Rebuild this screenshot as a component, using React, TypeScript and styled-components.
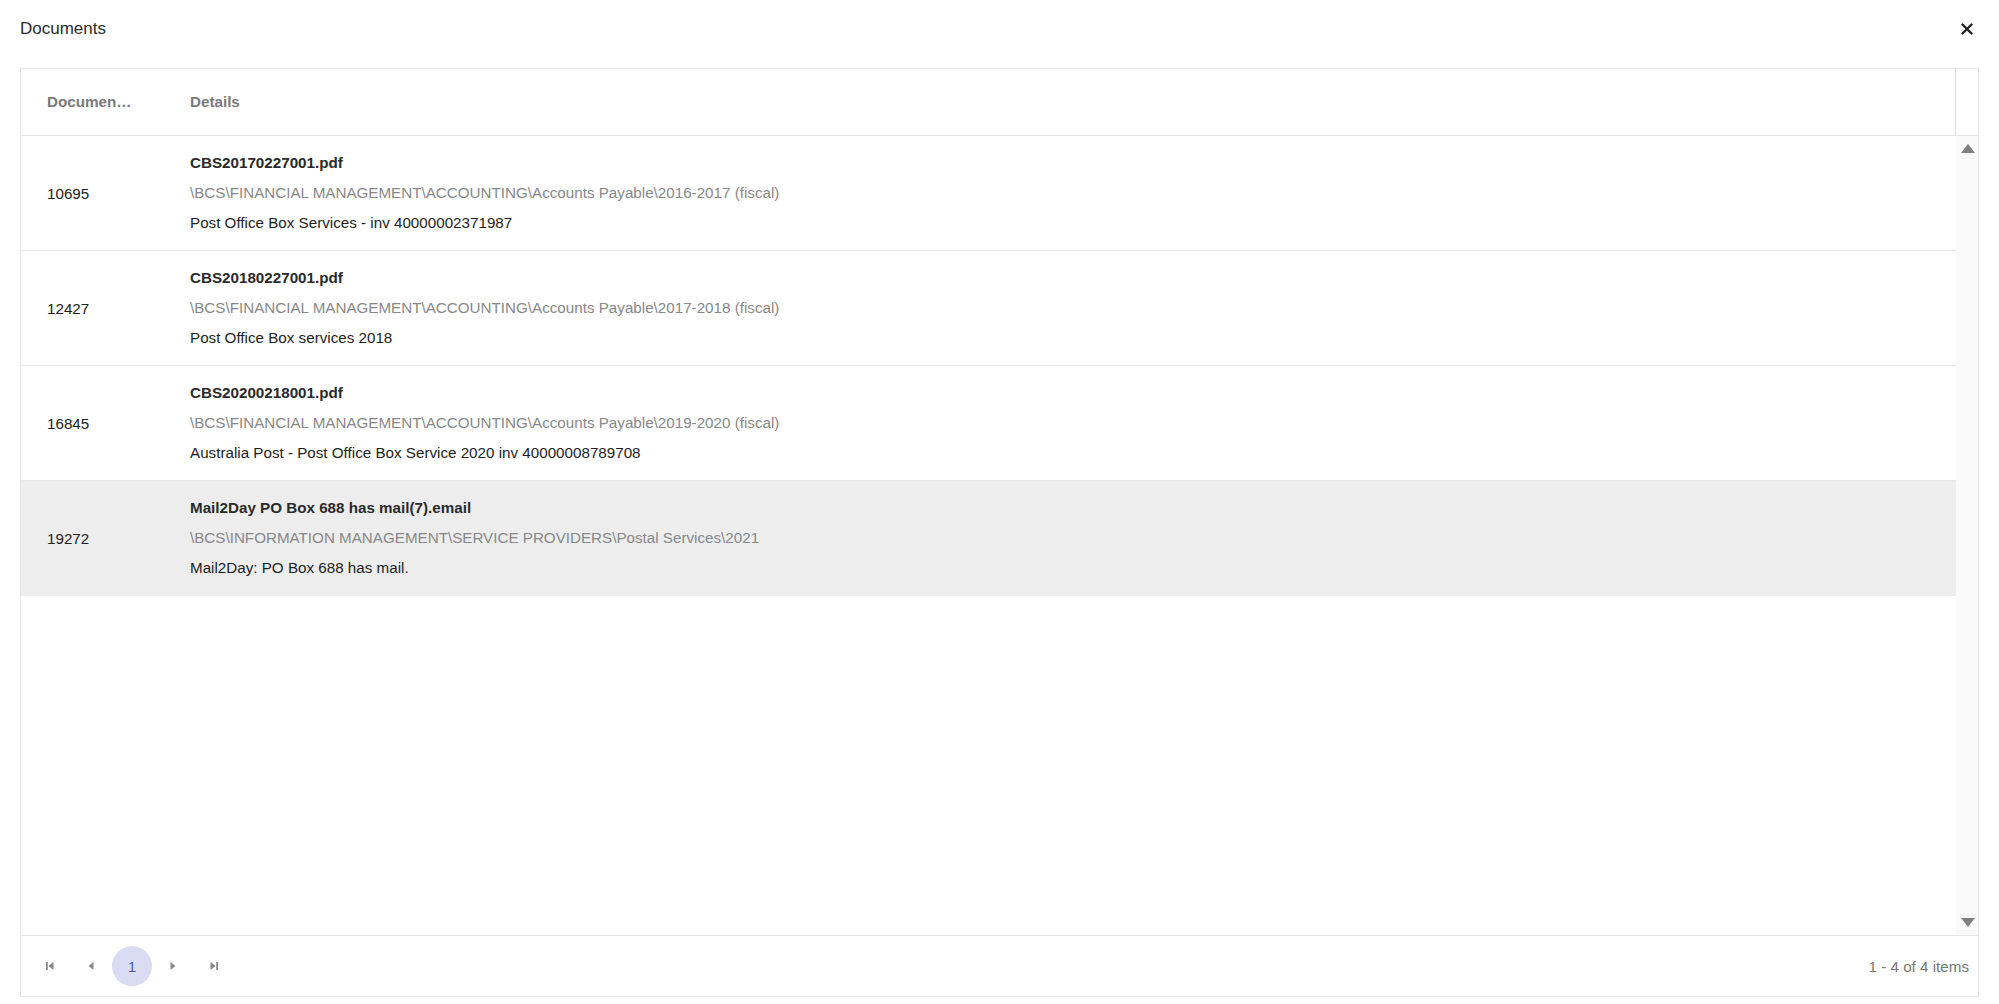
import React from "react";
import styled, { createGlobalStyle } from "styled-components";

type Doc = {
  id: string;
  name: string;
  path: string;
  description: string;
  selected?: boolean;
};

const docs: Doc[] = [
  {
    id: "10695",
    name: "CBS20170227001.pdf",
    path: "\\BCS\\FINANCIAL MANAGEMENT\\ACCOUNTING\\Accounts Payable\\2016-2017 (fiscal)",
    description: "Post Office Box Services - inv 40000002371987",
  },
  {
    id: "12427",
    name: "CBS20180227001.pdf",
    path: "\\BCS\\FINANCIAL MANAGEMENT\\ACCOUNTING\\Accounts Payable\\2017-2018 (fiscal)",
    description: "Post Office Box services 2018",
  },
  {
    id: "16845",
    name: "CBS20200218001.pdf",
    path: "\\BCS\\FINANCIAL MANAGEMENT\\ACCOUNTING\\Accounts Payable\\2019-2020 (fiscal)",
    description: "Australia Post - Post Office Box Service 2020 inv 40000008789708",
  },
  {
    id: "19272",
    name: "Mail2Day PO Box 688 has mail(7).email",
    path: "\\BCS\\INFORMATION MANAGEMENT\\SERVICE PROVIDERS\\Postal Services\\2021",
    description: "Mail2Day: PO Box 688 has mail.",
    selected: true,
  },
];

function PagerIcon({ kind }: { kind: "first" | "prev" | "next" | "last" }) {
  return (
    <svg width="12" height="12" viewBox="0 0 12 12" fill="#8a8a8a">
      {kind === "first" && (
        <>
          <rect x="2" y="2" width="1.8" height="8" />
          <polygon points="9.5,2 9.5,10 4.2,6" />
        </>
      )}
      {kind === "prev" && <polygon points="8.5,2 8.5,10 3.5,6" />}
      {kind === "next" && <polygon points="3.5,2 3.5,10 8.5,6" />}
      {kind === "last" && (
        <>
          <polygon points="2.5,2 2.5,10 7.8,6" />
          <rect x="8.2" y="2" width="1.8" height="8" />
        </>
      )}
    </svg>
  );
}

function App() {
  return (
    <>
      <GlobalStyle />
      <Window>
        <TitleBar>
          <Title>Documents</Title>
          <CloseButton aria-label="Close">
            <svg width="12" height="12" viewBox="0 0 12 12">
              <path
                d="M1.5 1.5 L10.5 10.5 M10.5 1.5 L1.5 10.5"
                stroke="#222"
                strokeWidth="2.4"
                strokeLinecap="round"
              />
            </svg>
          </CloseButton>
        </TitleBar>

        <Grid>
          <HeaderRow>
            <HeaderCells>
              <HeaderCell $first>Document ID</HeaderCell>
              <HeaderCell>Details</HeaderCell>
            </HeaderCells>
            <HeaderSpacer />
          </HeaderRow>

          <Body>
            <Rows>
              {docs.map((doc) => (
                <Row key={doc.id} $selected={doc.selected}>
                  <IdCell>{doc.id}</IdCell>
                  <DetailsCell>
                    <FileName>{doc.name}</FileName>
                    <FilePath>{doc.path}</FilePath>
                    <Description>{doc.description}</Description>
                  </DetailsCell>
                </Row>
              ))}
            </Rows>
            <Scrollbar>
              <ArrowUp />
              <ArrowDown />
            </Scrollbar>
          </Body>

          <Pager>
            <PagerNav>
              <PagerButton>
                <PagerIcon kind="first" />
              </PagerButton>
              <PagerButton>
                <PagerIcon kind="prev" />
              </PagerButton>
              <PageNumber>1</PageNumber>
              <PagerButton>
                <PagerIcon kind="next" />
              </PagerButton>
              <PagerButton>
                <PagerIcon kind="last" />
              </PagerButton>
            </PagerNav>
            <PagerInfo>1 - 4 of 4 items</PagerInfo>
          </Pager>
        </Grid>
      </Window>
    </>
  );
}

const GlobalStyle = createGlobalStyle`
  html, body {
    margin: 0;
    padding: 0;
    background: #ffffff;
  }

  body {
    font-family: "Liberation Sans", Arial, sans-serif;
    color: #222222;
  }
`;

const Window = styled.div`
  width: 1999px;
  height: 1004px;
  box-sizing: border-box;
  padding: 0 20px 7px 20px;
  display: flex;
  flex-direction: column;
`;

const TitleBar = styled.div`
  height: 58px;
  margin-bottom: 10px;
  display: flex;
  align-items: center;
  justify-content: space-between;
`;

const Title = styled.span`
  font-size: 17px;
  color: #2b2b2b;
`;

const CloseButton = styled.button`
  width: 24px;
  height: 24px;
  padding: 0;
  border: none;
  background: transparent;
  display: flex;
  align-items: center;
  justify-content: center;
  cursor: pointer;
`;

const Grid = styled.div`
  flex: 1;
  display: flex;
  flex-direction: column;
  border: 1px solid #e6e6e6;
  min-height: 0;
`;

const HeaderRow = styled.div`
  height: 66px;
  display: flex;
  border-bottom: 1px solid #e6e6e6;
`;

const HeaderCells = styled.div`
  flex: 1;
  display: flex;
  border-right: 1px solid #e0e0e0;
`;

const HeaderCell = styled.div<{ $first?: boolean }>`
  width: ${(p) => (p.$first ? "143px" : "auto")};
  flex: ${(p) => (p.$first ? "none" : "1")};
  box-sizing: border-box;
  padding: 0 32px 0 26px;
  line-height: 66px;
  font-size: 15.2px;
  font-weight: 700;
  color: #7a7a7a;
  white-space: nowrap;
  overflow: hidden;
  text-overflow: ellipsis;
`;

const HeaderSpacer = styled.div`
  width: 22px;
`;

const Body = styled.div`
  flex: 1;
  display: flex;
  min-height: 0;
`;

const Rows = styled.div`
  flex: 1;
  display: flex;
  flex-direction: column;
`;

const Row = styled.div<{ $selected?: boolean }>`
  display: flex;
  align-items: center;
  background: ${(p) => (p.$selected ? "#ededed" : "#ffffff")};
  border-bottom: 1px solid ${(p) => (p.$selected ? "#ededed" : "#e8e8e8")};
  font-size: 15.2px;
`;

const IdCell = styled.div`
  width: 143px;
  box-sizing: border-box;
  padding: 0 26px 0 26px;
  color: #222222;
`;

const DetailsCell = styled.div`
  flex: 1;
  padding: 12px 26px 12px 26px;
  display: flex;
  flex-direction: column;
  line-height: 30px;
`;

const FileName = styled.div`
  font-weight: 700;
  color: #2a2a2a;
`;

const FilePath = styled.div`
  color: #888888;
`;

const Description = styled.div`
  color: #1e1e1e;
`;

const Scrollbar = styled.div`
  width: 22px;
  background: #fafafa;
  display: flex;
  flex-direction: column;
  justify-content: space-between;
  align-items: center;
  padding: 8px 0 8px 0;
`;

const ArrowUp = styled.div`
  width: 0;
  height: 0;
  margin-left: 1px;
  border-left: 7px solid transparent;
  border-right: 7px solid transparent;
  border-bottom: 9px solid #808080;
`;

const ArrowDown = styled.div`
  width: 0;
  height: 0;
  margin-left: 1px;
  border-left: 7px solid transparent;
  border-right: 7px solid transparent;
  border-top: 9px solid #808080;
`;

const Pager = styled.div`
  height: 60px;
  border-top: 1px solid #e6e6e6;
  display: flex;
  align-items: center;
  justify-content: space-between;
  padding: 0 9px 0 9px;
`;

const PagerNav = styled.div`
  display: flex;
  align-items: center;
  gap: 1px;
`;

const PagerButton = styled.button`
  width: 40px;
  height: 40px;
  padding: 0;
  border: none;
  background: transparent;
  display: flex;
  align-items: center;
  justify-content: center;
  cursor: pointer;
`;

const PageNumber = styled.span`
  width: 40px;
  height: 40px;
  border-radius: 50%;
  background: #d9dcf2;
  color: #4a5bbd;
  font-size: 15.2px;
  display: flex;
  align-items: center;
  justify-content: center;
`;

const PagerInfo = styled.span`
  font-size: 15.2px;
  color: #777777;
`;

export default App;
